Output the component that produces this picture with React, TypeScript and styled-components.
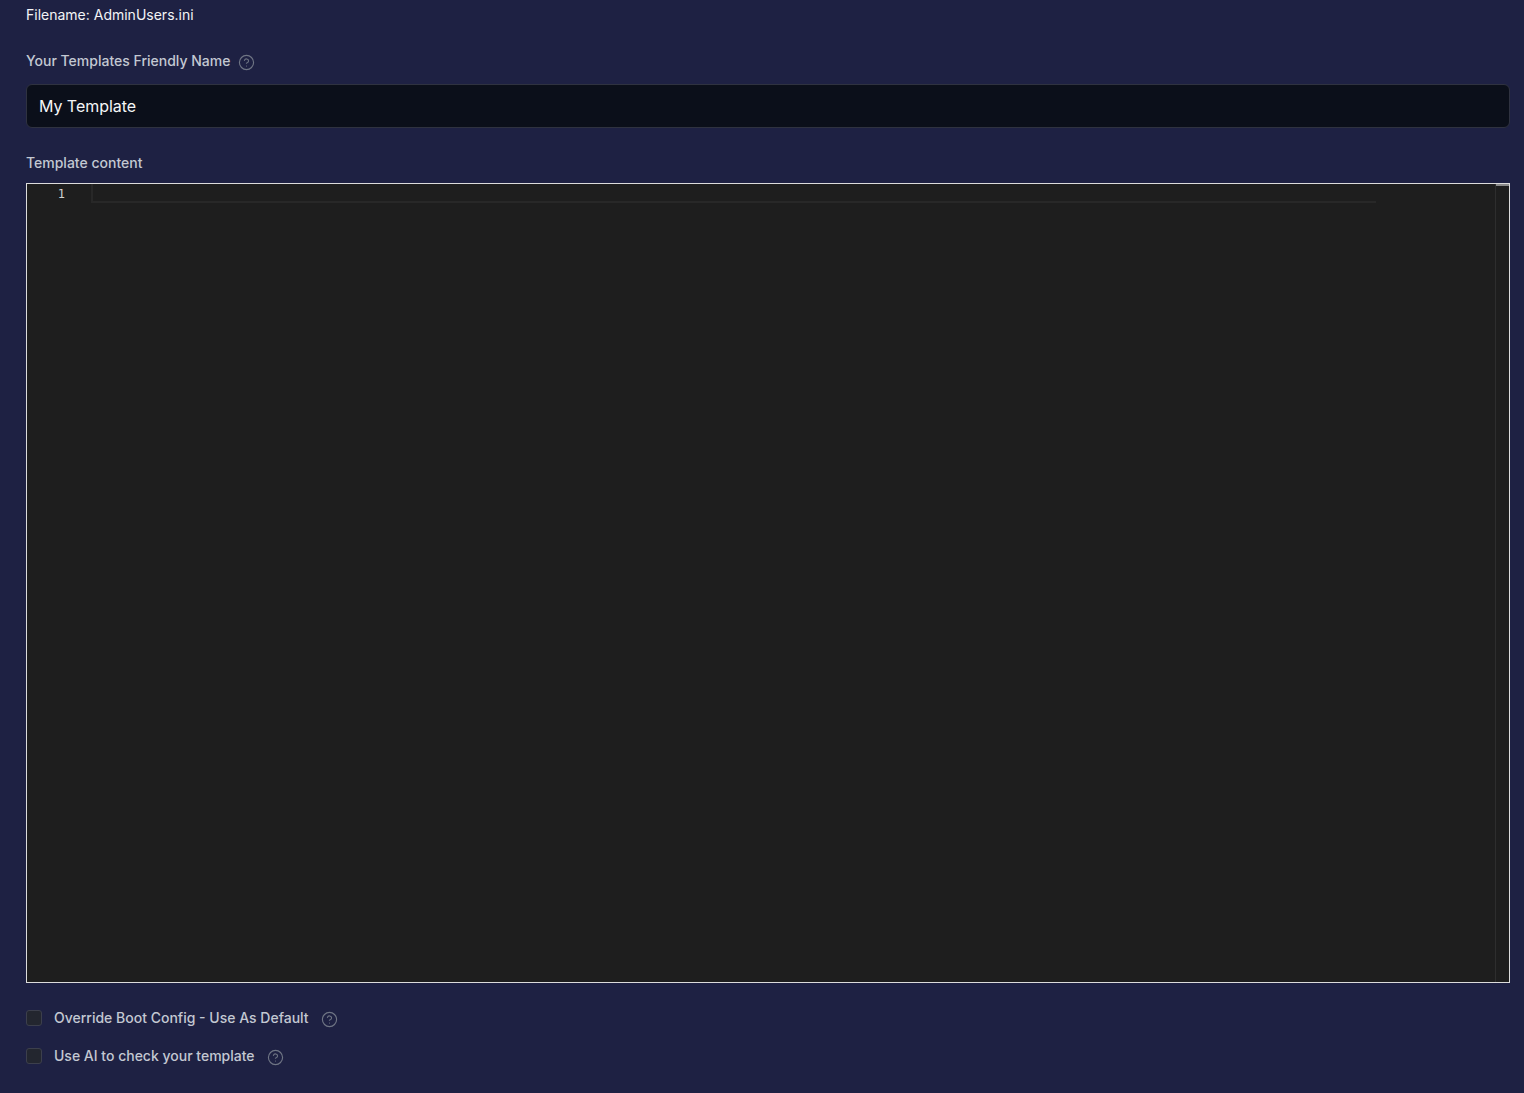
import React from "react";
import styled, { createGlobalStyle } from "styled-components";
import { CircleHelp } from "lucide-react";

const Global = createGlobalStyle`
  html, body { margin: 0; padding: 0; background: #1e2143; }
  body { font-family: Inter, "Liberation Sans", sans-serif; }
  * { box-sizing: border-box; }
`;

const Page = styled.main`
  width: 1524px;
  height: 1093px;
  overflow: hidden;
  padding: 6px 14px 0 26px;
  background: #1e2143;
  display: flex;
  flex-direction: column;
`;

const Filename = styled.div`
  font-size: 14px;
  line-height: 18px;
  color: #f3f4f6;
  margin-bottom: 28px;
`;

const LabelRow = styled.div<{ $gap: number }>`
  display: flex;
  align-items: center;
  gap: 8px;
  height: 18px;
  margin-bottom: ${(p) => p.$gap}px;
`;

const Label = styled.label`
  font-size: 14px;
  line-height: 18px;
  font-weight: 500;
  color: #c3c8d2;
`;

const HelpIcon = styled(CircleHelp).attrs({ size: 17, strokeWidth: 1.6 })`
  color: #6f7584;
  flex: none;
  transform: translateY(1px);
`;

const NameInput = styled.input`
  display: block;
  width: 100%;
  height: 44px;
  padding: 0 12px;
  margin-bottom: 26px;
  background: #0b0f1a;
  border: 1px solid #2f3240;
  border-radius: 6px;
  color: #f5f6f8;
  font: 400 16px/24px Inter, "Liberation Sans", sans-serif;
  letter-spacing: -0.05px;
  outline: none;
`;

const Editor = styled.div`
  height: 800px;
  border: 1px solid #dcdcdc;
  background: #1e1e1e;
  display: grid;
  grid-template-columns: 64px 1fr 14px;
  overflow: hidden;
`;

const Gutter = styled.div`
  padding: 1px 26px 0 0;
  font: 12px/18px "DejaVu Sans Mono", "Liberation Mono", monospace;
  color: #d0d0d0;
  text-align: right;
`;

const CodeArea = styled.div`
  padding-right: 119px;
`;

const LineHighlight = styled.div`
  height: 19px;
  border-left: 2px solid #282828;
  border-bottom: 2px solid #282828;
`;

const Ruler = styled.div`
  border-left: 1px solid #2e2e2e;
`;

const RulerThumb = styled.div`
  height: 2px;
  background: #8a8a8a;
`;

const Options = styled.div`
  display: flex;
  flex-direction: column;
  gap: 20px;
  margin-top: 26px;
`;

const OptionRow = styled.div`
  display: flex;
  align-items: center;
  height: 18px;
`;

const Check = styled.input.attrs({ type: "checkbox" })`
  appearance: none;
  width: 16px;
  height: 16px;
  margin: 0 12px 0 0;
  background: #23262f;
  border: 1px solid #3c3f4c;
  border-radius: 3px;
  flex: none;
`;

const OptionLabel = styled(Label)`
  margin-right: 12px;
`;

export default function App() {
  return (
    <>
      <Global />
      <Page>
        <Filename>Filename: AdminUsers.ini</Filename>
        <LabelRow $gap={14}>
          <Label>Your Templates Friendly Name</Label>
          <HelpIcon />
        </LabelRow>
        <NameInput defaultValue="My Template" />
        <LabelRow $gap={11}>
          <Label>Template content</Label>
        </LabelRow>
        <Editor>
          <Gutter>1</Gutter>
          <CodeArea>
            <LineHighlight />
          </CodeArea>
          <Ruler>
            <RulerThumb />
          </Ruler>
        </Editor>
        <Options>
          <OptionRow>
            <Check />
            <OptionLabel>Override Boot Config - Use As Default</OptionLabel>
            <HelpIcon />
          </OptionRow>
          <OptionRow>
            <Check />
            <OptionLabel>Use AI to check your template</OptionLabel>
            <HelpIcon />
          </OptionRow>
        </Options>
      </Page>
    </>
  );
}
